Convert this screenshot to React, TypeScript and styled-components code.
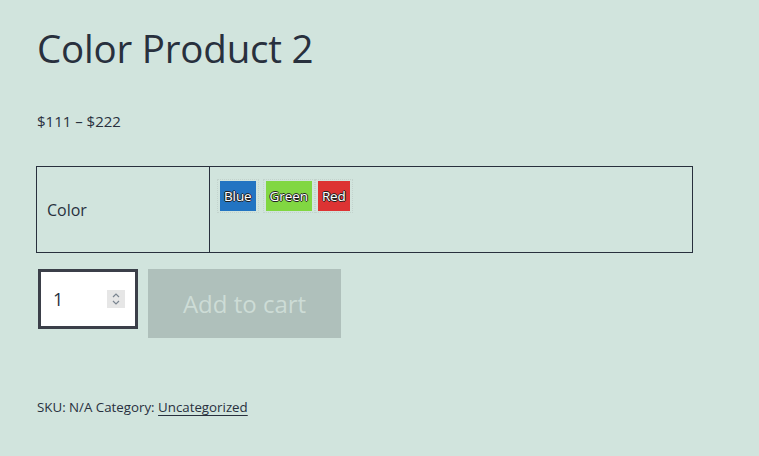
import styled, { createGlobalStyle } from 'styled-components';

const GlobalStyle = createGlobalStyle`
  html, body {
    margin: 0;
    padding: 0;
    background: #d1e4dd;
  }
  body {
    font-family: "Open Sans", "Noto Sans", sans-serif;
    color: #28303d;
  }
`;

const Page = styled.div`
  padding: 20px 36px 0 37px;
  display: flex;
  flex-direction: column;
`;

const Title = styled.h1`
  margin: 0;
  font-size: 38.5px;
  font-weight: 400;
  line-height: 56px;
  letter-spacing: -0.2px;
`;

const Price = styled.p`
  margin: 33px 0 0;
  font-size: 15px;
  line-height: 24px;
`;

const VariationsTable = styled.table`
  margin: 33px 0 0 -1px;
  width: 657px;
  border-collapse: collapse;
  border: 1px solid #28303d;
`;

const LabelCell = styled.th`
  width: 162px;
  height: 84px;
  padding: 1px 0 0 10px;
  border: 1px solid #28303d;
  text-align: left;
  font-weight: 400;
  font-size: 16px;
  vertical-align: middle;
`;

const ValueCell = styled.td`
  padding: 12px 6px 0 7px;
  border: 1px solid #28303d;
  vertical-align: top;
`;

const Swatches = styled.div`
  display: flex;
`;

const SwatchWrap = styled.div<{ $gap: number }>`
  margin-right: ${p => p.$gap}px;
  padding: 2px 3px;
  outline: 1px dotted #c3d3cd;
  outline-offset: -1px;
`;

const Swatch = styled.span<{ $bg: string }>`
  display: block;
  height: 30px;
  padding: 0 4px;
  background: ${p => p.$bg};
  color: #fff;
  font-size: 13.5px;
  line-height: 30px;
  letter-spacing: -0.1px;
  text-shadow: -1px 0 #222, 1px 0 #222, 0 -1px #222, 0 1px #222;
`;

const CartRow = styled.div`
  margin-top: 16px;
  display: flex;
  align-items: flex-start;
  gap: 10px;
`;

const QtyBox = styled.div`
  margin-left: 1px;
  height: 54px;
  width: 72px;
  border: 3px solid #3b3f49;
  background: #fff;
  display: flex;
  align-items: center;
  justify-content: space-between;
  padding: 0 10px 0 12px;
  box-sizing: content-box;
  font-size: 18px;
`;

const Spinner = styled.span`
  width: 18px;
  height: 18px;
  background: #e6e6e6;
  display: flex;
  align-items: center;
  justify-content: center;
`;

const CartButton = styled.button`
  width: 193px;
  height: 69px;
  border: none;
  background: #afc0bb;
  color: #cddcd6;
  font-family: inherit;
  font-size: 24px;
  padding: 0;
  cursor: not-allowed;
`;

const Meta = styled.div`
  margin-top: 59px;
  font-size: 13.3px;
  line-height: 20px;
`;

const MetaLink = styled.a`
  color: inherit;
  text-decoration: underline;
  text-underline-offset: 3px;
`;

const swatches = [
  { name: 'Blue', color: '#2274c2', gap: 4 },
  { name: 'Green', color: '#81d742', gap: 0 },
  { name: 'Red', color: '#dd3333', gap: 0 },
];

export default function App() {
  return (
    <>
      <GlobalStyle />
      <Page>
        <Title>Color Product 2</Title>
        <Price>$111 – $222</Price>
        <VariationsTable>
          <tbody>
            <tr>
              <LabelCell>Color</LabelCell>
              <ValueCell>
                <Swatches>
                  {swatches.map(s => (
                    <SwatchWrap key={s.name} $gap={s.gap}>
                      <Swatch $bg={s.color}>{s.name}</Swatch>
                    </SwatchWrap>
                  ))}
                </Swatches>
              </ValueCell>
            </tr>
          </tbody>
        </VariationsTable>
        <CartRow>
          <QtyBox>
            <span>1</span>
            <Spinner>
              <svg width="10" height="14" viewBox="0 0 10 14" fill="none" stroke="#7a8590" strokeWidth="1.2">
                <path d="M2 5 L5 2 L8 5" />
                <path d="M2 9 L5 12 L8 9" />
              </svg>
            </Spinner>
          </QtyBox>
          <CartButton disabled>Add to cart</CartButton>
        </CartRow>
        <Meta>
          SKU: N/A Category: <MetaLink href="#">Uncategorized</MetaLink>
        </Meta>
      </Page>
    </>
  );
}
